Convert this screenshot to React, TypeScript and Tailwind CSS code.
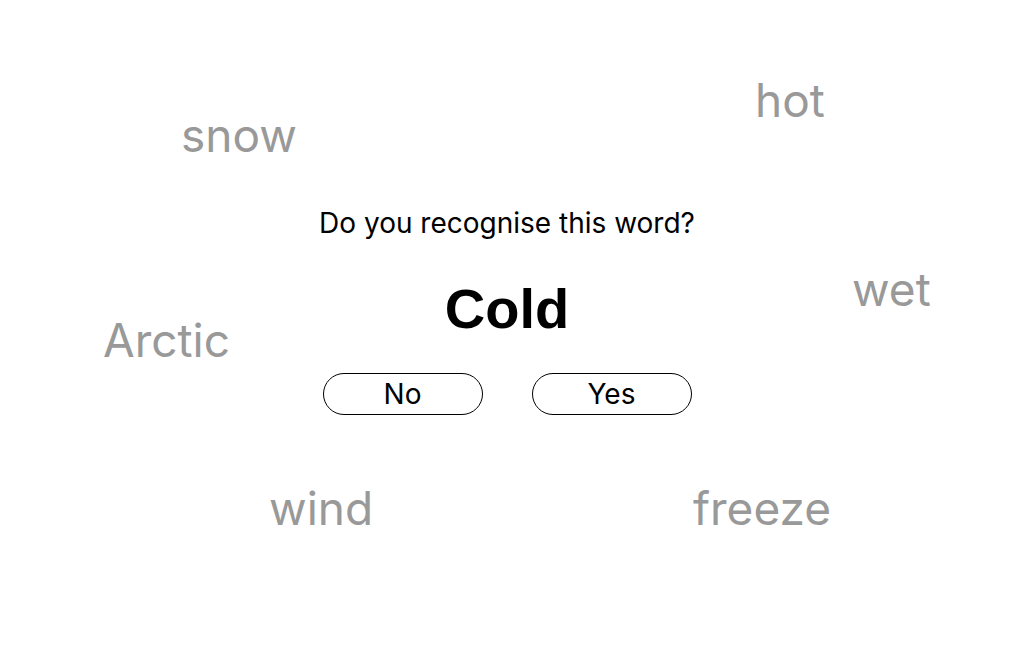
const words = [
  { text: "snow", className: "left-[181px] top-[108px]" },
  { text: "hot", className: "left-[755px] top-[73px]" },
  { text: "wet", className: "left-[852px] top-[262px]" },
  { text: "Arctic", className: "left-[103px] top-[313px]" },
  { text: "wind", className: "left-[269px] top-[481px]" },
  { text: "freeze", className: "left-[693px] top-[481px]" },
];

function App() {
  return (
    <main className="relative w-screen h-[655px] overflow-hidden bg-white font-['Inter',sans-serif]">
      {words.map((w) => (
        <span
          key={w.text}
          className={`absolute text-[46px] leading-[54px] text-[#999999] ${w.className}`}
        >
          {w.text}
        </span>
      ))}
      <section className="relative flex flex-col items-center pt-[206px] pr-[10px]">
        <p className="text-[28px] leading-[34px] text-black">Do you recognise this word?</p>
        <h1 className="mt-[37px] font-['Liberation_Sans',Arial,sans-serif] font-bold text-[56px] leading-[64px] text-black">
          Cold
        </h1>
        <div className="mt-[32px] flex gap-[49px]">
          <button className="w-[160px] h-[42px] rounded-full border border-black text-[28px] leading-none text-black">
            No
          </button>
          <button className="w-[160px] h-[42px] rounded-full border border-black text-[28px] leading-none text-black">
            Yes
          </button>
        </div>
      </section>
    </main>
  );
}

export default App;
